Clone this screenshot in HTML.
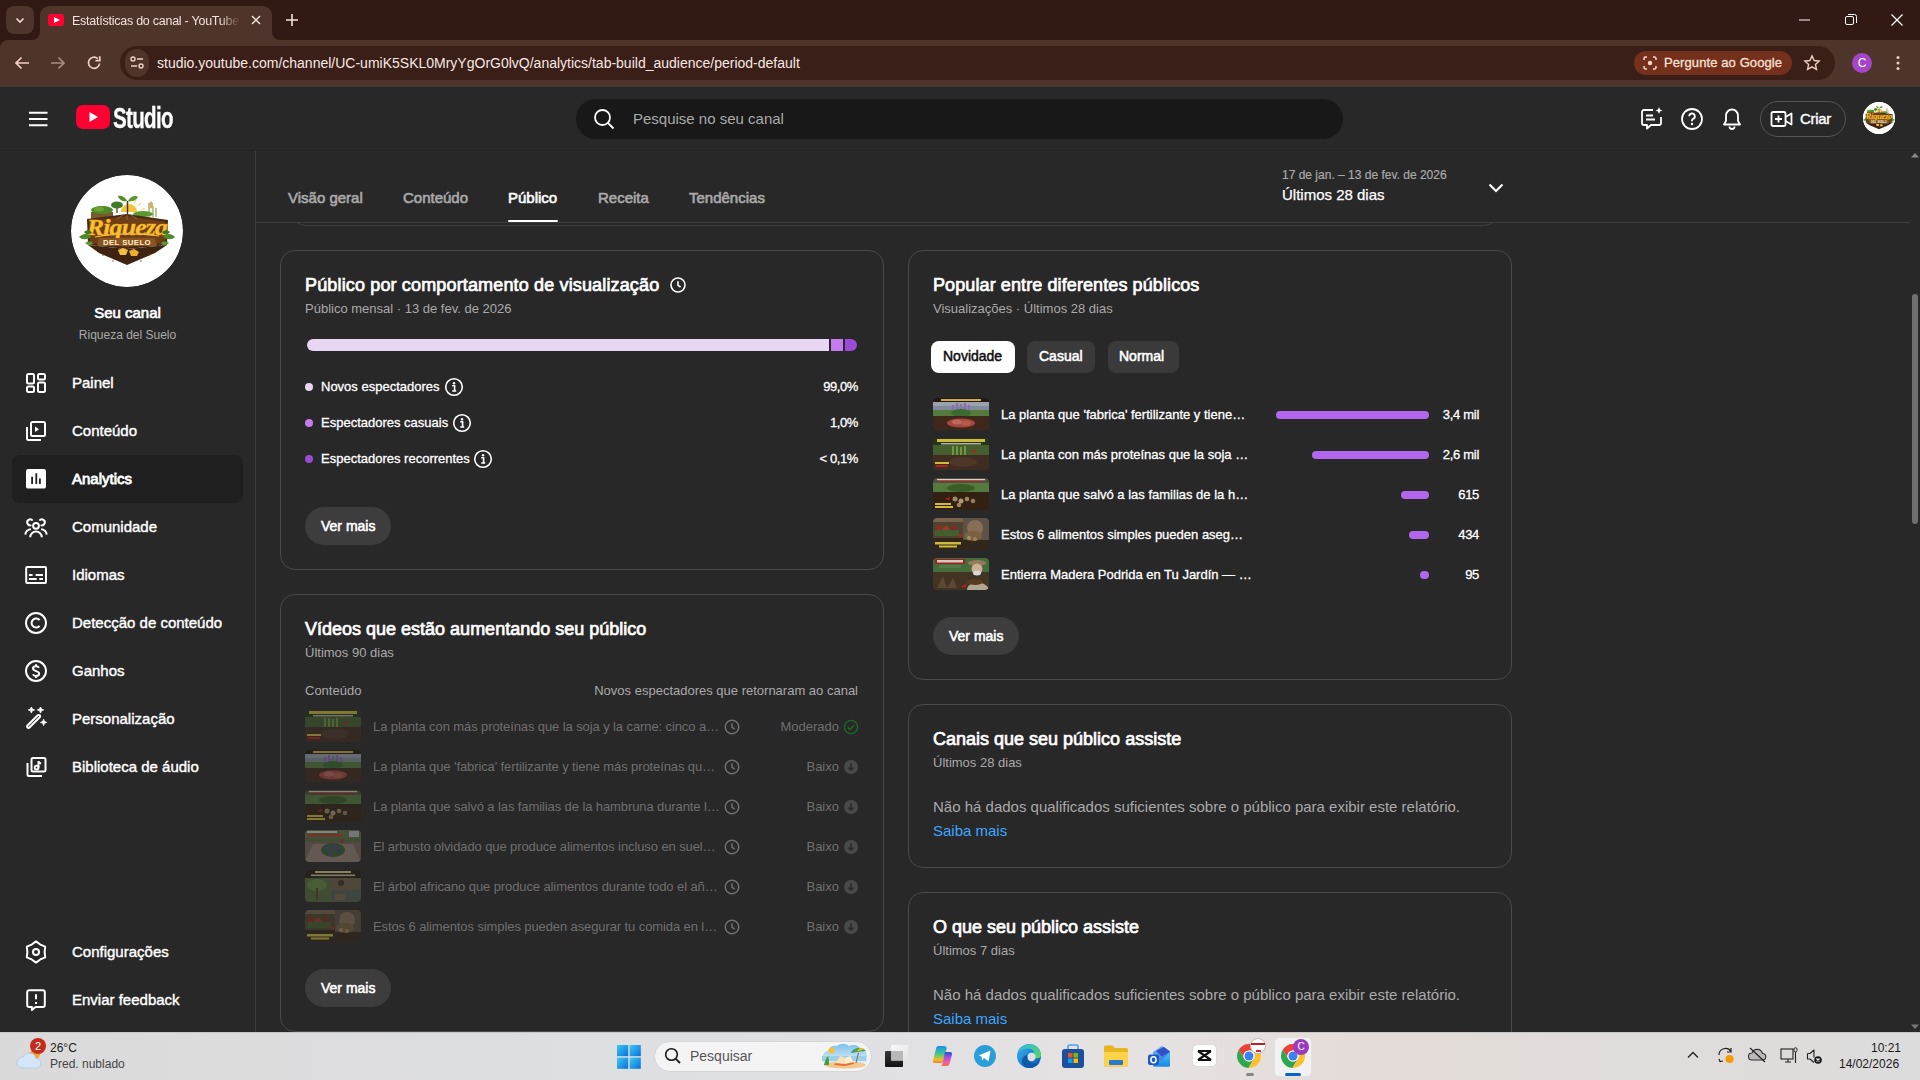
<!DOCTYPE html>
<html><head><meta charset="utf-8"><style>*{box-sizing:border-box;margin:0;padding:0}
html,body{width:1920px;height:1080px;overflow:hidden;background:#282828;font-family:"Liberation Sans",sans-serif;color:#fff}
.a{position:absolute}
.nw{white-space:nowrap;line-height:normal}
.card{position:absolute;border:1px solid #4a4a4a;border-radius:15px;background:#282828}
.t1{background:linear-gradient(180deg,#2a2a1a 0%,#6a7a9a 15%,#8a7ab0 30%,#4a7a3a 55%,#5a3a2a 75%,#b05040 90%,#4a2a1a 100%)}
.t2{background:linear-gradient(180deg,#c8b020 0%,#3a4a20 12%,#4a6a2a 35%,#6a4a2a 60%,#3a2a1a 85%,#c0a020 95%)}
.t3{background:linear-gradient(180deg,#8a3a20 0%,#3a6a2a 15%,#5a8a3a 40%,#5a4020 65%,#8a6a3a 80%,#3a2a1a 100%)}
.t4{background:linear-gradient(135deg,#4a3020 0%,#7a3a2a 30%,#8a6a4a 55%,#5a4030 80%,#2a2010 100%)}
.t5{background:linear-gradient(90deg,#6a6a4a 0%,#5a5a3a 40%,#c0a080 60%,#6a5030 100%)}
.t6{background:linear-gradient(180deg,#5a5a3a 0%,#4a6a3a 30%,#a08070 55%,#9a8070 80%,#7a6050 100%)}
.t7{background:linear-gradient(90deg,#4a6a2a 0%,#6a8a3a 40%,#8a6a4a 60%,#5a4a30 100%)}
</style></head><body>
<div class="a" style="left:0px;top:0px;width:1920px;height:40px;background:#331913;border-radius:0px;"></div>
<div class="a" style="left:6px;top:6px;width:28px;height:28px;background:#4f342c;border-radius:8px;"></div>
<svg class="a" style="left:14px;top:14px;" width="12" height="12" viewBox="0 0 12 12"><path d="M2.5 4.5L6 8l3.5-3.5" stroke="#f0d8d0" stroke-width="1.6" fill="none"/></svg>
<div class="a" style="left:40px;top:6px;width:232px;height:34px;background:#4f342c;border-radius:0px;border-radius:9px 9px 0 0"></div>
<svg class="a" style="left:32px;top:32px;" width="8" height="8" viewBox="0 0 8 8"><path d="M8 0V8H0A8 8 0 0 0 8 0z" fill="#4f342c"/></svg>
<svg class="a" style="left:272px;top:32px;" width="8" height="8" viewBox="0 0 8 8"><path d="M0 0V8H8A8 8 0 0 1 0 0z" fill="#4f342c"/></svg>
<div class="a" style="left:48px;top:14px;width:16px;height:12px;background:#ff0033;border-radius:3px;"></div>
<svg class="a" style="left:54px;top:17px;" width="6" height="6" viewBox="0 0 6 6"><path d="M0 0L6 3L0 6Z" fill="#fff"/></svg>
<div class="a nw" style="left:72px;top:14px;font-size:12.5px;letter-spacing:-0.25px;color:#f3e1da;width:168px;overflow:hidden;-webkit-mask-image:linear-gradient(90deg,#000 88%,transparent)">Estatísticas do canal - YouTube Studio</div>
<svg class="a" style="left:250px;top:14px;" width="12" height="12" viewBox="0 0 12 12"><path d="M2 2L10 10M10 2L2 10" stroke="#f3e1da" stroke-width="1.5"/></svg>
<svg class="a" style="left:285px;top:13px;" width="14" height="14" viewBox="0 0 14 14"><path d="M7 1V13M1 7H13" stroke="#f3e1da" stroke-width="1.6"/></svg>
<svg class="a" style="left:1798px;top:14px;" width="14" height="12" viewBox="0 0 14 12"><path d="M1 6H12" stroke="#fff" stroke-width="1"/></svg>
<svg class="a" style="left:1844px;top:13px;" width="14" height="14" viewBox="0 0 14 14"><rect x="1.5" y="3.5" width="8" height="8" rx="1.5" stroke="#fff" fill="none"/><path d="M4 1.5H10.5a2 2 0 0 1 2 2V10" stroke="#fff" fill="none"/></svg>
<svg class="a" style="left:1890px;top:13px;" width="14" height="14" viewBox="0 0 14 14"><path d="M1.5 1.5L12.5 12.5M12.5 1.5L1.5 12.5" stroke="#fff" stroke-width="1.2"/></svg>
<div class="a" style="left:0px;top:40px;width:20px;height:20px;background:#331913;border-radius:0px;"></div>
<div class="a" style="left:0px;top:40px;width:1920px;height:46px;background:#4f342c;border-radius:0px;border-radius:8px 0 0 0"></div>
<svg class="a" style="left:13px;top:54px;" width="18" height="18" viewBox="0 0 18 18"><path d="M16 9H3M8.5 3.5L3 9l5.5 5.5" stroke="#f0d0c6" stroke-width="1.7" fill="none"/></svg>
<svg class="a" style="left:49px;top:54px;" width="18" height="18" viewBox="0 0 18 18"><path d="M2 9H15M9.5 3.5L15 9l-5.5 5.5" stroke="#a88c84" stroke-width="1.7" fill="none"/></svg>
<svg class="a" style="left:85px;top:54px;" width="18" height="18" viewBox="0 0 18 18"><path d="M14.6 9.5A5.6 5.6 0 1 1 12.8 4.6" stroke="#f0d0c6" stroke-width="1.7" fill="none"/><path d="M14.8 2.2V6.6H10.4" stroke="#f0d0c6" stroke-width="1.7" fill="none"/></svg>
<div class="a" style="left:120px;top:46px;width:1715px;height:34px;background:#3a1e18;border-radius:17px;"></div>
<div class="a" style="left:125px;top:49px;width:24px;height:28px;background:#4f342c;border-radius:14px;"></div>
<svg class="a" style="left:129px;top:55px;" width="16" height="16" viewBox="0 0 16 16"><circle cx="4" cy="4" r="2" stroke="#f0d0c6" stroke-width="1.4" fill="none"/><path d="M8 4H14M2 11H8" stroke="#f0d0c6" stroke-width="1.4"/><circle cx="12" cy="11" r="2" stroke="#f0d0c6" stroke-width="1.4" fill="none"/></svg>
<div class="a nw" style="top:55px;font-size:14px;color:#f8e8e2;left:157px;">studio.youtube.com/channel/UC-umiK5SKL0MryYgOrG0lvQ/analytics/tab-build_audience/period-default</div>
<div class="a" style="left:1634px;top:51px;width:158px;height:24px;background:#75301c;border-radius:12px;"></div>
<svg class="a" style="left:1642px;top:55px;" width="16" height="16" viewBox="0 0 16 16"><path d="M2 5V3.5A1.5 1.5 0 0 1 3.5 2H5M11 2h1.5A1.5 1.5 0 0 1 14 3.5V5M14 11v1.5a1.5 1.5 0 0 1-1.5 1.5H11M5 14H3.5A1.5 1.5 0 0 1 2 12.5V11" stroke="#f8d8cc" stroke-width="1.5" fill="none"/><circle cx="8" cy="8" r="2.2" fill="#f8d8cc"/></svg>
<div class="a nw" style="top:55px;font-size:13px;color:#f8e0d6;left:1664px;-webkit-text-stroke:0.3px currentColor;letter-spacing:0.1px;">Pergunte ao Google</div>
<svg class="a" style="left:1803px;top:54px;" width="18" height="18" viewBox="0 0 24 24"><path d="M12 2.5l2.9 6.2 6.7.7-5 4.6 1.4 6.6L12 17.2l-5.9 3.4 1.4-6.6-5-4.6 6.7-.7z" stroke="#f0d0c6" stroke-width="1.8" fill="none"/></svg>
<div class="a" style="left:1852px;top:53px;width:20px;height:20px;border-radius:10px;background:#a545c8;color:#fff;font-size:12px;text-align:center;line-height:20px">C</div>
<svg class="a" style="left:1894px;top:55px;" width="8" height="16" viewBox="0 0 8 16"><circle cx="4" cy="2.5" r="1.5" fill="#f0d0c6"/><circle cx="4" cy="8" r="1.5" fill="#f0d0c6"/><circle cx="4" cy="13.5" r="1.5" fill="#f0d0c6"/></svg>
<div class="a" style="left:0px;top:86px;width:1920px;height:1px;background:#3a3a3a;border-radius:0px;"></div>
<svg class="a" style="left:29px;top:111px;" width="19" height="16" viewBox="0 0 19 16"><path d="M0 1.75H18.5M0 8H18.5M0 14.25H18.5" stroke="#fff" stroke-width="2"/></svg>
<div class="a" style="left:76px;top:105px;width:34px;height:24px;background:#ff0033;border-radius:7px;"></div>
<svg class="a" style="left:89px;top:112px;" width="10" height="10" viewBox="0 0 10 10"><path d="M0.5 0L9 5L0.5 10Z" fill="#fff"/></svg>
<div class="a nw" style="left:113px;top:102px;font-size:30px;font-weight:bold;letter-spacing:-1px;transform:scaleX(0.685);transform-origin:0 0;line-height:32px;-webkit-text-stroke:0.3px #fff">Studio</div>
<div class="a" style="left:576px;top:99px;width:767px;height:40px;background:#181818;border-radius:20px;"></div>
<svg class="a" style="left:592px;top:107px;" width="24" height="24" viewBox="0 0 24 24"><circle cx="10.5" cy="10.5" r="7.5" stroke="#fff" stroke-width="1.8" fill="none"/><path d="M16 16L21.5 21.5" stroke="#fff" stroke-width="1.8"/></svg>
<div class="a nw" style="top:110px;font-size:15px;color:#aaa;left:633px;">Pesquise no seu canal</div>
<svg class="a" style="left:1640px;top:106px;" width="24" height="24" viewBox="0 0 24 24"><path d="M13 4H4a2 2 0 0 0-2 2v11a2 2 0 0 0 2 2h3v3.5l4-3.5h8a2 2 0 0 0 2-2v-6" stroke="#fff" stroke-width="1.8" fill="none" stroke-linejoin="round"/><path d="M6 9.5H13M6 13.5H15" stroke="#fff" stroke-width="1.8"/><path d="M19 1l1 2.5 2.5 1-2.5 1-1 2.5-1-2.5-2.5-1 2.5-1z" fill="#fff"/></svg>
<svg class="a" style="left:1680px;top:107px;" width="24" height="24" viewBox="0 0 24 24"><circle cx="12" cy="12" r="10" stroke="#fff" stroke-width="1.8" fill="none"/><path d="M9.2 9.3a2.8 2.8 0 1 1 3.8 2.6c-.7.3-1 .9-1 1.6v.8" stroke="#fff" stroke-width="1.8" fill="none"/><circle cx="12" cy="17" r="1.2" fill="#fff"/></svg>
<svg class="a" style="left:1720px;top:107px;" width="24" height="24" viewBox="0 0 24 24"><path d="M12 2.5a6 6 0 0 0-6 6v5.5L4 17.5h16L18 14V8.5a6 6 0 0 0-6-6z" stroke="#fff" stroke-width="1.8" fill="none" stroke-linejoin="round"/><path d="M9.5 19.5a2.5 2.5 0 0 0 5 0" stroke="#fff" stroke-width="1.8" fill="none"/></svg>
<div class="a" style="left:1760px;top:101px;width:86px;height:36px;border:1px solid #555;border-radius:18px"></div>
<svg class="a" style="left:1770px;top:107px;" width="24" height="24" viewBox="0 0 24 24"><rect x="1.5" y="5" width="14" height="14" rx="1.5" stroke="#fff" stroke-width="1.8" fill="none"/><path d="M8.5 8.5V15.5M5 12H12" stroke="#fff" stroke-width="1.8"/><path d="M15.5 10L21.5 6.5V17.5L15.5 14" stroke="#fff" stroke-width="1.8" fill="none" stroke-linejoin="round"/></svg>
<div class="a nw" style="top:110px;font-size:15px;color:#fff;left:1800px;-webkit-text-stroke:0.4px currentColor;letter-spacing:-0.3px;">Criar</div>
<div class="a" style="left:1863px;top:102px;width:32px;height:32px;border-radius:16px;background:#fff;overflow:hidden"><svg width="32" height="32" viewBox="8 8 96 96"><use href="#logo"/></svg></div>
<div class="a" style="left:0px;top:150px;width:1920px;height:1px;background:#232323;border-radius:0px;"></div>
<div class="a" style="left:255px;top:151px;width:1px;height:881px;background:#3e3e3e"></div>
<svg width="0" height="0" style="position:absolute"><defs><g id="logo">
<circle cx="56" cy="56" r="56" fill="#fff"/>
<path d="M66 37a8 8 0 0 0-16 0z" fill="#f4c23c"/>
<path d="M58 28l1-4M63 29l2-4M67 31l3-3M70 35l4-2" stroke="#f6cf5a" stroke-width="1"/>
<path d="M20 37h22v7H20z" fill="#7a5a2a"/>
<ellipse cx="31" cy="35" rx="11" ry="4" fill="#4e8a26"/><ellipse cx="28" cy="34" rx="5" ry="2.5" fill="#6aa632"/>
<path d="M46 38v-7" stroke="#5a3e1a" stroke-width="1.3"/><ellipse cx="46" cy="30" rx="6" ry="3.5" fill="#3f7a28"/>
<path d="M56.5 39V26" stroke="#3a3a18" stroke-width="1.4"/>
<path d="M56 26c-2-5-7-6-9-5 1 4 5 6 9 5z" fill="#4f8e2a"/><path d="M57 26c2-5 8-6 10-4-2 4-6 5-10 4z" fill="#5a9a30"/>
<path d="M78 42V28M82 42V31M85 42V33" stroke="#9ab060" stroke-width="1.4"/><ellipse cx="80" cy="30" rx="2" ry="3.5" fill="#d8b070"/>
<ellipse cx="72" cy="39" rx="10" ry="3" fill="#5a9a30"/>
<path d="M16 44L56 39L97 45L96 70L56 74L17 70Z" fill="#4a2a12"/>
<path d="M18 46L56 41L95 47L94 68L56 72L19 68Z" fill="#6e3e16"/>
<path d="M52 40l-6 4M56 40v5M60 40l6 4" stroke="#a07848" stroke-width=".7"/>
<text x="56" y="60" text-anchor="middle" font-family="Liberation Serif" font-style="italic" font-weight="bold" font-size="24" fill="#f8c230" stroke="#f0a820" stroke-width=".5" letter-spacing="-.8" transform="translate(56 0) scale(1.08 1) translate(-56 0)">Riqueza</text>
<path d="M24 62C45 58 70 58 88 61" stroke="#f0b838" stroke-width="1.2" fill="none"/>
<path d="M28 63H84L86 71H26Z" fill="#8a5422"/>
<text x="56" y="70" text-anchor="middle" font-family="Liberation Sans" font-weight="bold" font-size="7.8" fill="#fcf0c8" letter-spacing=".4">DEL SUELO</text>
<path d="M17 70L56 74L96 70L84 78L56 90L28 78Z" fill="#3e2410"/>
<path d="M47 75l5-2 5 2-2 5-6 0z" fill="#f2c03a"/><path d="M58 76l5-2 5 3-2 4-6 0z" fill="#eab030"/>
<circle cx="32" cy="80" r=".8" fill="#6a4020"/><circle cx="78" cy="80" r=".8" fill="#6a4020"/><circle cx="42" cy="86" r=".7" fill="#6a4020"/><circle cx="70" cy="86" r=".7" fill="#6a4020"/>
<path d="M8 62c4-4 9-4 12 0-4 3-9 3-12 0z" fill="#4a8a2a"/><path d="M13 57c3-3 7-2 8 1-3 2-6 2-8-1z" fill="#3d7a22"/><path d="M14 68c3-2 7-2 8 1-3 2-6 1-8-1z" fill="#5a9a32"/>
<path d="M104 62c-4-4-9-4-12 0 4 3 9 3 12 0z" fill="#4a8a2a"/><path d="M99 57c-3-3-7-2-8 1 3 2 6 2 8-1z" fill="#3d7a22"/><path d="M98 68c-3-2-7-2-8 1 3 2 6 1 8-1z" fill="#5a9a32"/>
</g>
</defs></svg>
<div class="a" style="left:71px;top:175px;width:112px;height:112px;border-radius:56px;overflow:hidden"><svg width="112" height="112" viewBox="0 0 112 112"><use href="#logo"/></svg></div>
<div class="a nw" style="left:0;width:255px;text-align:center;top:304px;font-size:15px;-webkit-text-stroke:0.65px #fff">Seu canal</div>
<div class="a nw" style="left:0;width:255px;text-align:center;top:328px;font-size:12px;color:#aaa">Riqueza del Suelo</div>
<div class="a" style="left:12px;top:455px;width:231px;height:48px;background:#1f1f1f;border-radius:8px;"></div>
<div class="a nw" style="top:374px;font-size:15px;color:#fff;left:72px;-webkit-text-stroke:0.4px currentColor;">Painel</div>
<svg class="a" style="left:24px;top:371px;" width="24" height="24" viewBox="0 0 24 24"><g fill="none" stroke="#fff" stroke-width="2"><rect x="3" y="3" width="7" height="9.5" rx="1.5"/><rect x="14" y="3" width="7" height="5.5" rx="1.5"/><rect x="3" y="15.5" width="7" height="5.5" rx="1.5"/><rect x="14" y="11.5" width="7" height="9.5" rx="1.5"/></g></svg>
<div class="a nw" style="top:422px;font-size:15px;color:#fff;left:72px;-webkit-text-stroke:0.4px currentColor;">Conteúdo</div>
<svg class="a" style="left:24px;top:419px;" width="24" height="24" viewBox="0 0 24 24"><g fill="none" stroke="#fff" stroke-width="2"><rect x="7" y="3" width="14" height="14" rx="1.5"/><path d="M3 8v11.5a1.5 1.5 0 0 0 1.5 1.5H17"/><path d="M11 7.5v5.5l4-2.75z" fill="#fff" stroke="none"/></g></svg>
<div class="a nw" style="top:470px;font-size:15px;color:#fff;left:72px;-webkit-text-stroke:0.4px currentColor;-webkit-text-stroke:0.8px #fff">Analytics</div>
<svg class="a" style="left:24px;top:467px;" width="24" height="24" viewBox="0 0 24 24"><g fill="none" stroke="#fff" stroke-width="2"><rect x="2" y="2" width="20" height="19.6" rx="2.2" fill="#fff" stroke="none"/><path d="M8.1 17V9.8M12.3 17V6.2M15.9 17V11.6" stroke="#1f1f1f" stroke-width="1.8"/></g></svg>
<div class="a nw" style="top:518px;font-size:15px;color:#fff;left:72px;-webkit-text-stroke:0.4px currentColor;">Comunidade</div>
<svg class="a" style="left:24px;top:515px;" width="24" height="24" viewBox="0 0 24 24"><g fill="none" stroke="#fff" stroke-width="2"><circle cx="12" cy="10.8" r="2.9"/><path d="M6.2 22.3a5.8 5.8 0 0 1 11.6 0"/><path d="M7.4 10.2A3 3 0 1 1 8.6 5.6M16.6 10.2A3 3 0 1 0 15.4 5.6"/><path d="M1.3 19.6A6 6 0 0 1 7 14.2M22.7 19.6A6 6 0 0 0 17 14.2"/></g></svg>
<div class="a nw" style="top:566px;font-size:15px;color:#fff;left:72px;-webkit-text-stroke:0.4px currentColor;">Idiomas</div>
<svg class="a" style="left:24px;top:563px;" width="24" height="24" viewBox="0 0 24 24"><g fill="none" stroke="#fff" stroke-width="2"><rect x="2.2" y="3.9" width="19.8" height="16.1" rx="1"/><path d="M4.9 12h3.7M11.6 12H19M4.9 16h7.8M15.3 16H19"/></g></svg>
<div class="a nw" style="top:614px;font-size:15px;color:#fff;left:72px;-webkit-text-stroke:0.4px currentColor;">Detecção de conteúdo</div>
<svg class="a" style="left:24px;top:611px;" width="24" height="24" viewBox="0 0 24 24"><g fill="none" stroke="#fff" stroke-width="2"><circle cx="12" cy="12" r="10"/><path d="M15.6 9.2A4.5 4.5 0 1 0 15.6 14.8"/></g></svg>
<div class="a nw" style="top:662px;font-size:15px;color:#fff;left:72px;-webkit-text-stroke:0.4px currentColor;">Ganhos</div>
<svg class="a" style="left:24px;top:659px;" width="24" height="24" viewBox="0 0 24 24"><g fill="none" stroke="#fff" stroke-width="2"><circle cx="12" cy="12" r="10"/><path d="M15 8.8c-.6-1-1.7-1.5-3-1.5-1.7 0-3 .9-3 2.3 0 3.2 6.2 1.8 6.2 5 0 1.4-1.3 2.4-3.2 2.4-1.4 0-2.6-.6-3.1-1.6M12 5.3v2M12 16.9v2"/></g></svg>
<div class="a nw" style="top:710px;font-size:15px;color:#fff;left:72px;-webkit-text-stroke:0.4px currentColor;">Personalização</div>
<svg class="a" style="left:24px;top:707px;" width="24" height="24" viewBox="0 0 24 24"><g fill="none" stroke="#fff" stroke-width="2"><path d="M3.5 20.5l10.2-10.2a1.4 1.4 0 0 1 2 0 1.4 1.4 0 0 1 0 2L5.5 22.5a1.4 1.4 0 0 1-2 0 1.4 1.4 0 0 1 0-2z" transform="translate(0,-2)"/><path d="M7.4 -3.3l.9 2.3 2.3.9-2.3.9-.9 2.3-.9-2.3-2.3-.9 2.3-.9zM16.5 -3.3l.9 2.3 2.3.9-2.3.9-.9 2.3-.9-2.3-2.3-.9 2.3-.9zM19.6 9.2l.9 2.3 2.3.9-2.3.9-.9 2.3-.9-2.3-2.3-.9 2.3-.9z" fill="#fff" stroke="#fff" stroke-width=".8" stroke-linejoin="round" transform="translate(0,3)"/></g></svg>
<div class="a nw" style="top:758px;font-size:15px;color:#fff;left:72px;-webkit-text-stroke:0.4px currentColor;">Biblioteca de áudio</div>
<svg class="a" style="left:24px;top:755px;" width="24" height="24" viewBox="0 0 24 24"><g fill="none" stroke="#fff" stroke-width="2"><rect x="7.5" y="3" width="14" height="13.5" rx="1.5"/><path d="M3.5 8v11.5A1.5 1.5 0 0 0 5 21h13"/><path d="M14.5 6.3v6.2"/><circle cx="12.6" cy="12.6" r="1.9"/><path d="M14.5 6.3c.3 1.3 1.4 2 2.6 2.2"/></g></svg>
<div class="a nw" style="top:943px;font-size:15px;color:#fff;left:72px;-webkit-text-stroke:0.4px currentColor;">Configurações</div>
<svg class="a" style="left:24px;top:940px;" width="24" height="24" viewBox="0 0 24 24"><g fill="none" stroke="#fff" stroke-width="2"><circle cx="12" cy="12" r="3"/><path d="M12.00 1.40 L16.30 4.55 L21.18 6.70 L20.60 12.00 L21.18 17.30 L16.30 19.45 L12.00 22.60 L7.70 19.45 L2.82 17.30 L3.40 12.00 L2.82 6.70 L7.70 4.55Z" stroke-linejoin="round"/></g></svg>
<div class="a nw" style="top:991px;font-size:15px;color:#fff;left:72px;-webkit-text-stroke:0.4px currentColor;">Enviar feedback</div>
<svg class="a" style="left:24px;top:988px;" width="24" height="24" viewBox="0 0 24 24"><g fill="none" stroke="#fff" stroke-width="2"><path d="M3.2 4.2a2 2 0 0 1 2-2h13.6a2 2 0 0 1 2 2V17a2 2 0 0 1-2 2H11.5l-3.6 3V19H5.2a2 2 0 0 1-2-2z" stroke-linejoin="round"/><path d="M12 6.3v5"/><path d="M12 14v2" /></g></svg>
<div class="a" style="left:290px;top:170px;width:1210px;height:56px;border:1px solid #3e3e3e;border-top:none;border-radius:0 0 16px 16px"></div>
<div class="a" style="left:256px;top:151px;width:1654px;height:72px;background:#282828;border-bottom:1px solid #3e3e3e"></div>
<div class="a nw" style="top:189px;font-size:15px;color:#aaa;left:288px;-webkit-text-stroke:0.6px #aaa">Visão geral</div>
<div class="a nw" style="top:189px;font-size:15px;color:#aaa;left:403px;-webkit-text-stroke:0.6px #aaa">Conteúdo</div>
<div class="a nw" style="top:189px;font-size:15px;color:#fff;left:508px;-webkit-text-stroke:0.6px #fff">Público</div>
<div class="a nw" style="top:189px;font-size:15px;color:#aaa;left:598px;-webkit-text-stroke:0.6px #aaa">Receita</div>
<div class="a nw" style="top:189px;font-size:15px;color:#aaa;left:689px;-webkit-text-stroke:0.6px #aaa">Tendências</div>
<div class="a" style="left:508px;top:220px;width:50px;height:2px;background:#fff;border-radius:1px;"></div>
<div class="a nw" style="top:168px;font-size:12px;color:#aaa;left:1282px;-webkit-text-stroke:0.2px #aaa">17 de jan. – 13 de fev. de 2026</div>
<div class="a nw" style="top:186px;font-size:15px;color:#fff;left:1282px;-webkit-text-stroke:0.25px #fff">Últimos 28 dias</div>
<svg class="a" style="left:1486px;top:179px;" width="20" height="18" viewBox="0 0 20 18"><path d="M3.5 5.5L10 12l6.5-6.5" stroke="#fff" stroke-width="2" fill="none"/></svg>
<svg class="a" style="left:1910px;top:151px;" width="10" height="8" viewBox="0 0 10 8"><path d="M1 6.5L5 2l4 4.5z" fill="#888"/></svg>
<svg class="a" style="left:1910px;top:1023px;" width="10" height="8" viewBox="0 0 10 8"><path d="M1 1.5L5 6l4-4.5z" fill="#777"/></svg>
<div class="a" style="left:1912px;top:294px;width:6px;height:230px;background:#707070;border-radius:3px;"></div>
<div class="card" style="left:280px;top:250px;width:604px;height:320px"></div>
<div class="a nw" style="top:275px;font-size:18px;color:#fff;left:305px;-webkit-text-stroke:0.7px currentColor;letter-spacing:0.15px;">Público por comportamento de visualização</div>
<svg class="a" style="left:669px;top:276px;" width="18" height="18" viewBox="0 0 18 18"><circle cx="9" cy="9" r="7" stroke="#fff" stroke-width="1.6" fill="none"/><path d="M9 5.3v4l2.6 1.7" stroke="#fff" stroke-width="1.6" fill="none"/></svg>
<div class="a nw" style="top:301px;font-size:13px;color:#aaa;left:305px;">Público mensal · 13 de fev. de 2026</div>
<div class="a" style="left:307px;top:339px;width:550px;height:12px;border-radius:6px;overflow:hidden;background:#282828">
 <div class="a" style="left:0;top:0;width:522px;height:12px;background:#e8d6f2"></div>
 <div class="a" style="left:524px;top:0;width:12px;height:12px;background:#c57bed"></div>
 <div class="a" style="left:538px;top:0;width:12px;height:12px;background:#9b4cd6"></div>
</div>
<div class="a" style="left:305px;top:383px;width:8px;height:8px;background:#e8d6f2;border-radius:4px;"></div>
<div class="a nw" style="top:379px;font-size:13px;color:#fff;left:321px;-webkit-text-stroke:0.3px currentColor;">Novos espectadores</div>
<svg class="a" style="left:444px;top:377px;" width="20" height="20" viewBox="0 0 20 20"><circle cx="10" cy="10" r="8.3" stroke="#fff" stroke-width="1.6" fill="none"/><circle cx="10" cy="6.2" r="1.2" fill="#fff"/><path d="M8.2 8.8h2.4v5.2M8.2 14h4" stroke="#fff" stroke-width="1.6" fill="none"/></svg>
<div class="a nw" style="top:379px;font-size:13px;color:#fff;right:1062px;-webkit-text-stroke:0.3px currentColor;letter-spacing:-0.4px;">99,0%</div>
<div class="a" style="left:305px;top:419px;width:8px;height:8px;background:#c57bed;border-radius:4px;"></div>
<div class="a nw" style="top:415px;font-size:13px;color:#fff;left:321px;-webkit-text-stroke:0.3px currentColor;">Espectadores casuais</div>
<svg class="a" style="left:452px;top:413px;" width="20" height="20" viewBox="0 0 20 20"><circle cx="10" cy="10" r="8.3" stroke="#fff" stroke-width="1.6" fill="none"/><circle cx="10" cy="6.2" r="1.2" fill="#fff"/><path d="M8.2 8.8h2.4v5.2M8.2 14h4" stroke="#fff" stroke-width="1.6" fill="none"/></svg>
<div class="a nw" style="top:415px;font-size:13px;color:#fff;right:1062px;-webkit-text-stroke:0.3px currentColor;letter-spacing:-0.4px;">1,0%</div>
<div class="a" style="left:305px;top:455px;width:8px;height:8px;background:#9b4cd6;border-radius:4px;"></div>
<div class="a nw" style="top:451px;font-size:13px;color:#fff;left:321px;-webkit-text-stroke:0.3px currentColor;">Espectadores recorrentes</div>
<svg class="a" style="left:473px;top:449px;" width="20" height="20" viewBox="0 0 20 20"><circle cx="10" cy="10" r="8.3" stroke="#fff" stroke-width="1.6" fill="none"/><circle cx="10" cy="6.2" r="1.2" fill="#fff"/><path d="M8.2 8.8h2.4v5.2M8.2 14h4" stroke="#fff" stroke-width="1.6" fill="none"/></svg>
<div class="a nw" style="top:451px;font-size:13px;color:#fff;right:1062px;-webkit-text-stroke:0.3px currentColor;letter-spacing:-0.4px;">< 0,1%</div>
<div class="a" style="left:305px;top:507px;width:86px;height:38px;background:#3d3d3d;border-radius:19px;"></div>
<div class="a nw" style="top:518px;font-size:14px;color:#fff;left:321px;-webkit-text-stroke:0.55px #fff">Ver mais</div>
<div class="card" style="left:280px;top:594px;width:604px;height:438px"></div>
<div class="a nw" style="top:619px;font-size:18px;color:#fff;left:305px;-webkit-text-stroke:0.7px currentColor;">Vídeos que estão aumentando seu público</div>
<div class="a nw" style="top:645px;font-size:13px;color:#aaa;left:305px;">Últimos 90 dias</div>
<div class="a nw" style="top:683px;font-size:13px;color:#aaa;left:305px;">Conteúdo</div>
<div class="a nw" style="top:683px;font-size:13px;color:#aaa;right:1062px;">Novos espectadores que retornaram ao canal</div>
<svg class="a" style="left:305px;top:710px;border-radius:4px;opacity:0.55;filter:saturate(.85) brightness(.9)" width="56" height="32" viewBox="0 0 56 32"><defs><clipPath id="ct2305710"><rect width="56" height="32" rx="4"/></clipPath></defs><g clip-path="url(#ct2305710)"><rect width="56" height="32" fill="#4a3a20"/>
<rect y="0" width="56" height="8" fill="#2a3a1a"/><rect x="4" y="1" width="48" height="3" fill="#e8d030"/><rect x="8" y="5" width="40" height="1.5" fill="#c8c8a0"/>
<rect y="7" width="56" height="10" fill="#4a6a2a"/>
<path d="M20 8V18M24 8V19M28 9V18M32 8V19" stroke="#7ab040" stroke-width="1.8"/>
<rect y="17" width="56" height="15" fill="#4a3020"/><ellipse cx="30" cy="24" rx="14" ry="5" fill="#5a3a28"/>
<path d="M38 14l5-3-1 4z" fill="#e02020"/>
<rect x="2" y="24" width="14" height="2" fill="#e8d030"/><rect x="3" y="27" width="12" height="2" fill="#d82020"/></g></svg>
<div class="a nw" style="top:719px;font-size:13px;color:#6f6f6f;left:373px;letter-spacing:-0.1px;">La planta con más proteínas que la soja y la carne: cinco a…</div>
<svg class="a" style="left:723px;top:718px;" width="18" height="18" viewBox="0 0 18 18"><circle cx="9" cy="9" r="6.8" stroke="#6f6f6f" stroke-width="1.5" fill="none"/><path d="M9 5.3v4l2.6 1.7" stroke="#6f6f6f" stroke-width="1.5" fill="none"/></svg>
<div class="a nw" style="top:719px;font-size:13px;color:#6f6f6f;right:1081px;">Moderado</div>
<svg class="a" style="left:843px;top:719px;" width="16" height="16" viewBox="0 0 16 16"><circle cx="8" cy="8" r="6.6" stroke="#16691f" stroke-width="1.4" fill="none"/><path d="M4.8 8.4l2.2 2 4.2-4.2" stroke="#16691f" stroke-width="1.5" fill="none"/></svg>
<svg class="a" style="left:305px;top:750px;border-radius:4px;opacity:0.55;filter:saturate(.85) brightness(.9)" width="56" height="32" viewBox="0 0 56 32"><defs><clipPath id="ct1305750"><rect width="56" height="32" rx="4"/></clipPath></defs><g clip-path="url(#ct1305750)"><rect width="56" height="32" fill="#3a2a1a"/>
<rect y="0" width="56" height="4" fill="#2a1a10"/><rect x="8" y="1" width="40" height="2" fill="#e8c040"/>
<rect y="4" width="56" height="10" fill="#8c9cb0"/><rect y="4" width="56" height="4" fill="#a8b4c4"/>
<path d="M20 14V7M24 14V5M28 14V6M32 14V5M36 14V7" stroke="#9a78c8" stroke-width="2.4"/>
<rect y="12" width="56" height="6" fill="#5a8a3a"/><ellipse cx="28" cy="15" rx="10" ry="4" fill="#3a7a2a"/>
<rect y="18" width="56" height="14" fill="#4a2c1a"/>
<ellipse cx="28" cy="25" rx="14" ry="4.5" fill="#c84a40"/><ellipse cx="24" cy="24" rx="5" ry="2.5" fill="#e07060"/><ellipse cx="33" cy="25" rx="5" ry="2.5" fill="#d86050"/></g></svg>
<div class="a nw" style="top:759px;font-size:13px;color:#6f6f6f;left:373px;letter-spacing:-0.1px;">La planta que 'fabrica' fertilizante y tiene más proteínas qu…</div>
<svg class="a" style="left:723px;top:758px;" width="18" height="18" viewBox="0 0 18 18"><circle cx="9" cy="9" r="6.8" stroke="#6f6f6f" stroke-width="1.5" fill="none"/><path d="M9 5.3v4l2.6 1.7" stroke="#6f6f6f" stroke-width="1.5" fill="none"/></svg>
<div class="a nw" style="top:759px;font-size:13px;color:#6f6f6f;right:1081px;">Baixo</div>
<svg class="a" style="left:843px;top:759px;" width="16" height="16" viewBox="0 0 16 16"><circle cx="8" cy="8" r="7" fill="#4a4a4a"/><path d="M8 4.3v6.5M5.5 8.5L8 11l2.5-2.5" stroke="#282828" stroke-width="1.5" fill="none"/></svg>
<svg class="a" style="left:305px;top:790px;border-radius:4px;opacity:0.55;filter:saturate(.85) brightness(.9)" width="56" height="32" viewBox="0 0 56 32"><defs><clipPath id="ct3305790"><rect width="56" height="32" rx="4"/></clipPath></defs><g clip-path="url(#ct3305790)"><rect width="56" height="32" fill="#3a2818"/>
<rect y="0" width="56" height="5" fill="#5a5a40"/><rect x="4" y="1" width="48" height="1.2" fill="#e8e8e0"/><rect x="6" y="3" width="44" height="1.2" fill="#d82020"/>
<rect y="5" width="56" height="9" fill="#5a8a3a"/><ellipse cx="28" cy="10" rx="14" ry="4" fill="#3a6a22"/>
<rect y="14" width="56" height="18" fill="#3a2412"/>
<circle cx="22" cy="21" r="2.5" fill="#b89868"/><circle cx="28" cy="23" r="2.5" fill="#c8a878"/><circle cx="34" cy="21" r="2.3" fill="#b89060"/><circle cx="40" cy="23" r="2.3" fill="#a88858"/><circle cx="26" cy="27" r="2.3" fill="#b09060"/>
<path d="M12 21l5-2-1 3z" fill="#e02020"/>
<rect x="2" y="25" width="16" height="2" fill="#e8d030"/><rect x="2" y="28" width="18" height="2" fill="#e8d030"/></g></svg>
<div class="a nw" style="top:799px;font-size:13px;color:#6f6f6f;left:373px;letter-spacing:-0.1px;">La planta que salvó a las familias de la hambruna durante l…</div>
<svg class="a" style="left:723px;top:798px;" width="18" height="18" viewBox="0 0 18 18"><circle cx="9" cy="9" r="6.8" stroke="#6f6f6f" stroke-width="1.5" fill="none"/><path d="M9 5.3v4l2.6 1.7" stroke="#6f6f6f" stroke-width="1.5" fill="none"/></svg>
<div class="a nw" style="top:799px;font-size:13px;color:#6f6f6f;right:1081px;">Baixo</div>
<svg class="a" style="left:843px;top:799px;" width="16" height="16" viewBox="0 0 16 16"><circle cx="8" cy="8" r="7" fill="#4a4a4a"/><path d="M8 4.3v6.5M5.5 8.5L8 11l2.5-2.5" stroke="#282828" stroke-width="1.5" fill="none"/></svg>
<svg class="a" style="left:305px;top:830px;border-radius:4px;opacity:0.55;filter:saturate(.85) brightness(.9)" width="56" height="32" viewBox="0 0 56 32"><defs><clipPath id="ct6305830"><rect width="56" height="32" rx="4"/></clipPath></defs><g clip-path="url(#ct6305830)"><rect width="56" height="32" fill="#8a7060"/>
<rect width="56" height="8" fill="#6a7a4a"/><rect x="2" y="1" width="30" height="2" fill="#e8e8d0"/><rect x="2" y="4" width="36" height="2.5" fill="#d84020"/><rect x="44" y="1" width="10" height="6" fill="#c8c8d0"/>
<rect y="8" width="56" height="4" fill="#5a7a3a"/>
<path d="M0 32L8 14H48L56 32z" fill="#a89080"/>
<ellipse cx="28" cy="20" rx="12" ry="7" fill="#3a6a2a"/><circle cx="23" cy="18" r="2.5" fill="#4a50a0"/><circle cx="30" cy="17" r="2.5" fill="#5050a8"/><circle cx="34" cy="21" r="2.3" fill="#4a48a0"/><circle cx="25" cy="23" r="2.3" fill="#4850a0"/>
<path d="M35 12l4-4-1 5z" fill="#e02020"/></g></svg>
<div class="a nw" style="top:839px;font-size:13px;color:#6f6f6f;left:373px;letter-spacing:-0.1px;">El arbusto olvidado que produce alimentos incluso en suel…</div>
<svg class="a" style="left:723px;top:838px;" width="18" height="18" viewBox="0 0 18 18"><circle cx="9" cy="9" r="6.8" stroke="#6f6f6f" stroke-width="1.5" fill="none"/><path d="M9 5.3v4l2.6 1.7" stroke="#6f6f6f" stroke-width="1.5" fill="none"/></svg>
<div class="a nw" style="top:839px;font-size:13px;color:#6f6f6f;right:1081px;">Baixo</div>
<svg class="a" style="left:843px;top:839px;" width="16" height="16" viewBox="0 0 16 16"><circle cx="8" cy="8" r="7" fill="#4a4a4a"/><path d="M8 4.3v6.5M5.5 8.5L8 11l2.5-2.5" stroke="#282828" stroke-width="1.5" fill="none"/></svg>
<svg class="a" style="left:305px;top:870px;border-radius:4px;opacity:0.55;filter:saturate(.85) brightness(.9)" width="56" height="32" viewBox="0 0 56 32"><defs><clipPath id="ct7305870"><rect width="56" height="32" rx="4"/></clipPath></defs><g clip-path="url(#ct7305870)"><rect width="56" height="32" fill="#4a3a22"/>
<rect width="56" height="8" fill="#2a2010"/><rect x="10" y="1" width="36" height="2" fill="#f0e0a0"/><rect x="6" y="4.5" width="44" height="1.6" fill="#e8d8a0"/>
<rect y="8" width="26" height="24" fill="#5a7a3a"/><ellipse cx="12" cy="15" rx="10" ry="6" fill="#6a9a3a"/><rect x="11" y="18" width="2" height="12" fill="#6a4a2a"/>
<rect x="26" y="8" width="30" height="12" fill="#7a6a4a"/><circle cx="36" cy="13" r="3" fill="#4a3a2a"/>
<rect x="26" y="20" width="30" height="12" fill="#5a6a5a"/><rect x="30" y="24" width="10" height="6" fill="#8a7050"/></g></svg>
<div class="a nw" style="top:879px;font-size:13px;color:#6f6f6f;left:373px;letter-spacing:-0.1px;">El árbol africano que produce alimentos durante todo el añ…</div>
<svg class="a" style="left:723px;top:878px;" width="18" height="18" viewBox="0 0 18 18"><circle cx="9" cy="9" r="6.8" stroke="#6f6f6f" stroke-width="1.5" fill="none"/><path d="M9 5.3v4l2.6 1.7" stroke="#6f6f6f" stroke-width="1.5" fill="none"/></svg>
<div class="a nw" style="top:879px;font-size:13px;color:#6f6f6f;right:1081px;">Baixo</div>
<svg class="a" style="left:843px;top:879px;" width="16" height="16" viewBox="0 0 16 16"><circle cx="8" cy="8" r="7" fill="#4a4a4a"/><path d="M8 4.3v6.5M5.5 8.5L8 11l2.5-2.5" stroke="#282828" stroke-width="1.5" fill="none"/></svg>
<svg class="a" style="left:305px;top:910px;border-radius:4px;opacity:0.55;filter:saturate(.85) brightness(.9)" width="56" height="32" viewBox="0 0 56 32"><defs><clipPath id="ct4305910"><rect width="56" height="32" rx="4"/></clipPath></defs><g clip-path="url(#ct4305910)"><rect width="56" height="32" fill="#3a2a1a"/>
<rect width="30" height="20" fill="#5a4a30"/><rect width="56" height="4" fill="#8a7050"/>
<circle cx="6" cy="10" r="3" fill="#a83020"/><circle cx="13" cy="11" r="3" fill="#b84030"/><circle cx="21" cy="10" r="3" fill="#983020"/>
<rect x="2" y="12" width="24" height="6" fill="#4a6a2a"/>
<rect x="30" y="0" width="26" height="22" fill="#6a5a4a"/><ellipse cx="42" cy="10" rx="8" ry="8" fill="#9a7a5a"/><ellipse cx="40" cy="18" rx="9" ry="5" fill="#8a6a40"/>
<circle cx="36" cy="20" r="2" fill="#c0a060"/><circle cx="42" cy="21" r="2" fill="#b89050"/>
<path d="M24 18l5-3-1 4z" fill="#e02020"/>
<rect x="2" y="24" width="26" height="2.5" fill="#e8d030"/><rect x="6" y="27.5" width="18" height="2" fill="#e8d030"/></g></svg>
<div class="a nw" style="top:919px;font-size:13px;color:#6f6f6f;left:373px;letter-spacing:-0.1px;">Estos 6 alimentos simples pueden asegurar tu comida en l…</div>
<svg class="a" style="left:723px;top:918px;" width="18" height="18" viewBox="0 0 18 18"><circle cx="9" cy="9" r="6.8" stroke="#6f6f6f" stroke-width="1.5" fill="none"/><path d="M9 5.3v4l2.6 1.7" stroke="#6f6f6f" stroke-width="1.5" fill="none"/></svg>
<div class="a nw" style="top:919px;font-size:13px;color:#6f6f6f;right:1081px;">Baixo</div>
<svg class="a" style="left:843px;top:919px;" width="16" height="16" viewBox="0 0 16 16"><circle cx="8" cy="8" r="7" fill="#4a4a4a"/><path d="M8 4.3v6.5M5.5 8.5L8 11l2.5-2.5" stroke="#282828" stroke-width="1.5" fill="none"/></svg>
<div class="a" style="left:305px;top:969px;width:86px;height:38px;background:#3d3d3d;border-radius:19px;"></div>
<div class="a nw" style="top:980px;font-size:14px;color:#fff;left:321px;-webkit-text-stroke:0.55px #fff">Ver mais</div>
<div class="card" style="left:908px;top:250px;width:604px;height:430px"></div>
<div class="a nw" style="top:275px;font-size:18px;color:#fff;left:933px;-webkit-text-stroke:0.7px currentColor;letter-spacing:0.1px;">Popular entre diferentes públicos</div>
<div class="a nw" style="top:301px;font-size:13px;color:#aaa;left:933px;">Visualizações · Últimos 28 dias</div>
<div class="a" style="left:931px;top:341px;width:84px;height:32px;background:#fff;border-radius:8px;"></div>
<div class="a nw" style="top:348px;font-size:14px;color:#0f0f0f;left:943px;-webkit-text-stroke:0.5px #0f0f0f">Novidade</div>
<div class="a" style="left:1027px;top:341px;width:68px;height:32px;background:#3a3a3a;border-radius:8px;"></div>
<div class="a nw" style="top:348px;font-size:14px;color:#fff;left:1039px;-webkit-text-stroke:0.55px #fff">Casual</div>
<div class="a" style="left:1108px;top:341px;width:71px;height:32px;background:#3a3a3a;border-radius:8px;"></div>
<div class="a nw" style="top:348px;font-size:14px;color:#fff;left:1119px;-webkit-text-stroke:0.55px #fff">Normal</div>
<svg class="a" style="left:933px;top:398px;border-radius:4px;opacity:1;filter:saturate(.85) brightness(.9)" width="56" height="32" viewBox="0 0 56 32"><defs><clipPath id="ct1933398"><rect width="56" height="32" rx="4"/></clipPath></defs><g clip-path="url(#ct1933398)"><rect width="56" height="32" fill="#3a2a1a"/>
<rect y="0" width="56" height="4" fill="#2a1a10"/><rect x="8" y="1" width="40" height="2" fill="#e8c040"/>
<rect y="4" width="56" height="10" fill="#8c9cb0"/><rect y="4" width="56" height="4" fill="#a8b4c4"/>
<path d="M20 14V7M24 14V5M28 14V6M32 14V5M36 14V7" stroke="#9a78c8" stroke-width="2.4"/>
<rect y="12" width="56" height="6" fill="#5a8a3a"/><ellipse cx="28" cy="15" rx="10" ry="4" fill="#3a7a2a"/>
<rect y="18" width="56" height="14" fill="#4a2c1a"/>
<ellipse cx="28" cy="25" rx="14" ry="4.5" fill="#c84a40"/><ellipse cx="24" cy="24" rx="5" ry="2.5" fill="#e07060"/><ellipse cx="33" cy="25" rx="5" ry="2.5" fill="#d86050"/></g></svg>
<div class="a nw" style="top:407px;font-size:13px;color:#fff;left:1001px;-webkit-text-stroke:0.3px currentColor;">La planta que 'fabrica' fertilizante y tiene…</div>
<div class="a" style="left:1276px;top:411px;width:153px;height:8px;background:#b266ee;border-radius:4px;"></div>
<div class="a nw" style="top:407px;font-size:13px;color:#fff;right:441px;-webkit-text-stroke:0.3px currentColor;letter-spacing:-0.3px;">3,4 mil</div>
<svg class="a" style="left:933px;top:438px;border-radius:4px;opacity:1;filter:saturate(.85) brightness(.9)" width="56" height="32" viewBox="0 0 56 32"><defs><clipPath id="ct2933438"><rect width="56" height="32" rx="4"/></clipPath></defs><g clip-path="url(#ct2933438)"><rect width="56" height="32" fill="#4a3a20"/>
<rect y="0" width="56" height="8" fill="#2a3a1a"/><rect x="4" y="1" width="48" height="3" fill="#e8d030"/><rect x="8" y="5" width="40" height="1.5" fill="#c8c8a0"/>
<rect y="7" width="56" height="10" fill="#4a6a2a"/>
<path d="M20 8V18M24 8V19M28 9V18M32 8V19" stroke="#7ab040" stroke-width="1.8"/>
<rect y="17" width="56" height="15" fill="#4a3020"/><ellipse cx="30" cy="24" rx="14" ry="5" fill="#5a3a28"/>
<path d="M38 14l5-3-1 4z" fill="#e02020"/>
<rect x="2" y="24" width="14" height="2" fill="#e8d030"/><rect x="3" y="27" width="12" height="2" fill="#d82020"/></g></svg>
<div class="a nw" style="top:447px;font-size:13px;color:#fff;left:1001px;-webkit-text-stroke:0.3px currentColor;">La planta con más proteínas que la soja …</div>
<div class="a" style="left:1312px;top:451px;width:117px;height:8px;background:#b266ee;border-radius:4px;"></div>
<div class="a nw" style="top:447px;font-size:13px;color:#fff;right:441px;-webkit-text-stroke:0.3px currentColor;letter-spacing:-0.3px;">2,6 mil</div>
<svg class="a" style="left:933px;top:478px;border-radius:4px;opacity:1;filter:saturate(.85) brightness(.9)" width="56" height="32" viewBox="0 0 56 32"><defs><clipPath id="ct3933478"><rect width="56" height="32" rx="4"/></clipPath></defs><g clip-path="url(#ct3933478)"><rect width="56" height="32" fill="#3a2818"/>
<rect y="0" width="56" height="5" fill="#5a5a40"/><rect x="4" y="1" width="48" height="1.2" fill="#e8e8e0"/><rect x="6" y="3" width="44" height="1.2" fill="#d82020"/>
<rect y="5" width="56" height="9" fill="#5a8a3a"/><ellipse cx="28" cy="10" rx="14" ry="4" fill="#3a6a22"/>
<rect y="14" width="56" height="18" fill="#3a2412"/>
<circle cx="22" cy="21" r="2.5" fill="#b89868"/><circle cx="28" cy="23" r="2.5" fill="#c8a878"/><circle cx="34" cy="21" r="2.3" fill="#b89060"/><circle cx="40" cy="23" r="2.3" fill="#a88858"/><circle cx="26" cy="27" r="2.3" fill="#b09060"/>
<path d="M12 21l5-2-1 3z" fill="#e02020"/>
<rect x="2" y="25" width="16" height="2" fill="#e8d030"/><rect x="2" y="28" width="18" height="2" fill="#e8d030"/></g></svg>
<div class="a nw" style="top:487px;font-size:13px;color:#fff;left:1001px;-webkit-text-stroke:0.3px currentColor;">La planta que salvó a las familias de la h…</div>
<div class="a" style="left:1401px;top:491px;width:28px;height:8px;background:#b266ee;border-radius:4px;"></div>
<div class="a nw" style="top:487px;font-size:13px;color:#fff;right:441px;-webkit-text-stroke:0.3px currentColor;letter-spacing:-0.3px;">615</div>
<svg class="a" style="left:933px;top:518px;border-radius:4px;opacity:1;filter:saturate(.85) brightness(.9)" width="56" height="32" viewBox="0 0 56 32"><defs><clipPath id="ct4933518"><rect width="56" height="32" rx="4"/></clipPath></defs><g clip-path="url(#ct4933518)"><rect width="56" height="32" fill="#3a2a1a"/>
<rect width="30" height="20" fill="#5a4a30"/><rect width="56" height="4" fill="#8a7050"/>
<circle cx="6" cy="10" r="3" fill="#a83020"/><circle cx="13" cy="11" r="3" fill="#b84030"/><circle cx="21" cy="10" r="3" fill="#983020"/>
<rect x="2" y="12" width="24" height="6" fill="#4a6a2a"/>
<rect x="30" y="0" width="26" height="22" fill="#6a5a4a"/><ellipse cx="42" cy="10" rx="8" ry="8" fill="#9a7a5a"/><ellipse cx="40" cy="18" rx="9" ry="5" fill="#8a6a40"/>
<circle cx="36" cy="20" r="2" fill="#c0a060"/><circle cx="42" cy="21" r="2" fill="#b89050"/>
<path d="M24 18l5-3-1 4z" fill="#e02020"/>
<rect x="2" y="24" width="26" height="2.5" fill="#e8d030"/><rect x="6" y="27.5" width="18" height="2" fill="#e8d030"/></g></svg>
<div class="a nw" style="top:527px;font-size:13px;color:#fff;left:1001px;-webkit-text-stroke:0.3px currentColor;">Estos 6 alimentos simples pueden aseg…</div>
<div class="a" style="left:1409px;top:531px;width:20px;height:8px;background:#b266ee;border-radius:4px;"></div>
<div class="a nw" style="top:527px;font-size:13px;color:#fff;right:441px;-webkit-text-stroke:0.3px currentColor;letter-spacing:-0.3px;">434</div>
<svg class="a" style="left:933px;top:558px;border-radius:4px;opacity:1;filter:saturate(.85) brightness(.9)" width="56" height="32" viewBox="0 0 56 32"><defs><clipPath id="ct5933558"><rect width="56" height="32" rx="4"/></clipPath></defs><g clip-path="url(#ct5933558)"><rect width="56" height="32" fill="#5a4a30"/>
<rect width="56" height="14" fill="#4a7a3a"/>
<rect x="2" y="1" width="30" height="5" fill="#c02020"/><rect x="4" y="2" width="26" height="2.5" fill="#f0e0d0"/>
<rect x="6" y="7" width="22" height="3" fill="#5a8a4a"/>
<rect y="14" width="56" height="18" fill="#4a3a22"/>
<path d="M4 30L10 18L14 30M14 30L20 20L24 30" fill="#6a5030"/>
<ellipse cx="44" cy="5" rx="9" ry="3" fill="#a88860"/><circle cx="44" cy="11" r="5.5" fill="#e8c0a0"/><ellipse cx="44" cy="15" rx="4" ry="2.5" fill="#f0f0f0"/>
<path d="M34 32C34 22 54 22 56 32z" fill="#c8b8a0"/><ellipse cx="42" cy="24" rx="8" ry="3" fill="#6a4020"/>
<path d="M28 28l6-2-2 4z" fill="#e02020"/></g></svg>
<div class="a nw" style="top:567px;font-size:13px;color:#fff;left:1001px;-webkit-text-stroke:0.3px currentColor;">Entierra Madera Podrida en Tu Jardín — …</div>
<div class="a" style="left:1420px;top:571px;width:9px;height:8px;background:#b266ee;border-radius:4px;"></div>
<div class="a nw" style="top:567px;font-size:13px;color:#fff;right:441px;-webkit-text-stroke:0.3px currentColor;letter-spacing:-0.3px;">95</div>
<div class="a" style="left:933px;top:617px;width:86px;height:38px;background:#3d3d3d;border-radius:19px;"></div>
<div class="a nw" style="top:628px;font-size:14px;color:#fff;left:949px;-webkit-text-stroke:0.55px #fff">Ver mais</div>
<div class="card" style="left:908px;top:704px;width:604px;height:164px"></div>
<div class="a nw" style="top:729px;font-size:18px;color:#fff;left:933px;-webkit-text-stroke:0.7px currentColor;">Canais que seu público assiste</div>
<div class="a nw" style="top:755px;font-size:13px;color:#aaa;left:933px;">Últimos 28 dias</div>
<div class="a nw" style="top:798px;font-size:15px;color:#aaa;left:933px;">Não há dados qualificados suficientes sobre o público para exibir este relatório.</div>
<div class="a nw" style="top:822px;font-size:15px;color:#3ea6ff;left:933px;">Saiba mais</div>
<div class="card" style="left:908px;top:892px;width:604px;height:300px"></div>
<div class="a nw" style="top:917px;font-size:18px;color:#fff;left:933px;-webkit-text-stroke:0.7px currentColor;">O que seu público assiste</div>
<div class="a nw" style="top:943px;font-size:13px;color:#aaa;left:933px;">Últimos 7 dias</div>
<div class="a nw" style="top:986px;font-size:15px;color:#aaa;left:933px;">Não há dados qualificados suficientes sobre o público para exibir este relatório.</div>
<div class="a nw" style="top:1010px;font-size:15px;color:#3ea6ff;left:933px;">Saiba mais</div>
<!-- TASKBAR -->
<div class="a" style="left:0;top:1032px;width:1920px;height:48px;background:linear-gradient(90deg,#dadada 0%,#dfe0e3 40%,#e6e2e2 60%,#e4dcd8 70%,#dcdcdc 100%)"></div>
<div class="a" style="left:0;top:1032px;width:1920px;height:1px;background:#c8c8c8"></div>
<!-- weather -->
<svg class="a" style="left:16px;top:1044px" width="30" height="26" viewBox="0 0 30 26"><circle cx="19" cy="10" r="5" fill="#f5a030"/><path d="M6 24a5.5 5.5 0 0 1 1-11 7 7 0 0 1 13 1.5 4.8 4.8 0 0 1 1 9.5z" fill="#d4e6f8"/><path d="M6 24a5.5 5.5 0 0 1 1-11 7 7 0 0 1 13 1.5 4.8 4.8 0 0 1 1 9.5z" fill="none" stroke="#a8c8ec" stroke-width=".8"/></svg>
<div class="a" style="left:30px;top:1038px;width:16px;height:16px;border-radius:8px;background:#c42b1c;color:#fff;font-size:11px;line-height:16px;text-align:center">2</div>
<div class="a nw" style="left:50px;top:1041px;font-size:12px;color:#1a1a1a">26°C</div>
<div class="a nw" style="left:50px;top:1057px;font-size:12px;color:#444">Pred. nublado</div>
<!-- start -->
<svg class="a" style="left:617px;top:1045px" width="24" height="24" viewBox="0 0 24 24"><defs><linearGradient id="wg" x1="0" y1="0" x2="1" y2="1"><stop offset="0" stop-color="#3ccaf4"/><stop offset="1" stop-color="#0a6fd8"/></linearGradient></defs><rect x="0" y="0" width="11.2" height="11.2" fill="url(#wg)"/><rect x="12.6" y="0" width="11.2" height="11.2" fill="url(#wg)"/><rect x="0" y="12.6" width="11.2" height="11.2" fill="url(#wg)"/><rect x="12.6" y="12.6" width="11.2" height="11.2" fill="url(#wg)"/></svg>
<!-- search -->
<div class="a" style="left:654px;top:1041px;width:218px;height:31px;border-radius:16px;background:#f4f4f4;border:1px solid #d6d6d6"></div>
<svg class="a" style="left:664px;top:1047px" width="18" height="18" viewBox="0 0 18 18"><circle cx="7.5" cy="7.5" r="5.8" stroke="#1a1a1a" stroke-width="1.6" fill="none"/><path d="M11.8 11.8L16 16" stroke="#1a1a1a" stroke-width="1.8"/></svg>
<div class="a nw" style="left:690px;top:1048px;font-size:14px;color:#555">Pesquisar</div>
<svg class="a" style="left:820px;top:1043px" width="48" height="26" viewBox="0 0 48 26"><defs><linearGradient id="sky" x1="0" y1="0" x2="0" y2="1"><stop offset="0" stop-color="#7ec0ea"/><stop offset="1" stop-color="#e0f0f8"/></linearGradient></defs>
<path d="M3 20C1 14 3 9 8 8c1-4 5-6 9-5 3-3 9-3 12 0 4-2 10-1 12 3 4 0 6 4 6 8v6z" fill="url(#sky)"/>
<circle cx="11.5" cy="7.5" r="3" fill="#f6c030"/>
<rect x="2" y="13" width="44" height="5" fill="#9cd0e8"/>
<ellipse cx="25" cy="22" rx="21" ry="3.5" fill="#f0c890"/>
<path d="M4 22c1-4 2-7 4-9 1 3 1 6 1 9z" fill="#4a9a3a"/>
<path d="M38.5 10L36 20" stroke="#6a5030" stroke-width=".8"/>
<path d="M31 10C33 5 41 3 46 8 43 8 37 9 31 10z" fill="#40a060"/><path d="M37 8.5C39 4 42 4 44 6 42 7 39 8 37 8.5z" fill="#f0c020"/>
<path d="M14 22L20 14 25 16 31 14 34 21 25 23z" fill="#e87030"/>
<path d="M15 20L20.5 13 25 15 25 21z" fill="#f8e4b8"/><path d="M25 15L30.5 13 33.5 19 25 21z" fill="#fdf0d0"/>
</svg>
<!-- task view -->
<svg class="a" style="left:884px;top:1044px" width="26" height="24" viewBox="0 0 26 24"><defs><linearGradient id="tvg" x1="0" y1="0" x2="1" y2="1"><stop offset="0" stop-color="#f8f8f8"/><stop offset="1" stop-color="#e4e4e4"/></linearGradient><linearGradient id="tvd" x1="0" y1="0" x2="0" y2="1"><stop offset="0" stop-color="#3a3a3a"/><stop offset="1" stop-color="#111"/></linearGradient></defs><rect x="1" y="7" width="18" height="16" rx="1" fill="url(#tvd)"/><rect x="7" y="1" width="17.5" height="15.5" rx="1" fill="url(#tvg)"/><rect x="7" y="7" width="12" height="9.5" fill="#b8b8b8"/></svg>
<!-- copilot -->
<svg class="a" style="left:928px;top:1044px" width="26" height="24" viewBox="0 0 26 24"><defs><linearGradient id="cg1" x1="0" y1="0" x2="0" y2="1"><stop offset="0" stop-color="#1a8ff0"/><stop offset=".45" stop-color="#3cc88a"/><stop offset=".8" stop-color="#f0c020"/><stop offset="1" stop-color="#f08030"/></linearGradient><linearGradient id="cg2" x1="0" y1="0" x2="0" y2="1"><stop offset="0" stop-color="#2050d8"/><stop offset=".4" stop-color="#b050e0"/><stop offset=".75" stop-color="#f060a0"/><stop offset="1" stop-color="#f07040"/></linearGradient></defs>
<path d="M10 2h6c1.5 0 2.3.8 2.8 2L15 17c-.4 1.3-1.2 2-2.6 2H7c-1.6 0-2.6-1-2-2.6L8 5c.4-1.8 1-3 2-3z" fill="url(#cg1)"/>
<path d="M13 22h6c1.3 0 2-.8 2.4-2l2.6-9.5c.4-1.5-.5-2.5-2-2.5h-5L14.3 20c-.3 1-.8 2-1.3 2z" fill="url(#cg2)"/></svg>
<!-- telegram -->
<svg class="a" style="left:973px;top:1044px" width="24" height="24" viewBox="0 0 24 24"><circle cx="12" cy="12" r="11" fill="#2a9ed8"/><path d="M5.5 11.5L17.5 6.5 15.5 17.5 11 14l-2 2.5-.5-4z" fill="#fff"/></svg>
<!-- edge -->
<svg class="a" style="left:1016px;top:1043px" width="26" height="26" viewBox="0 0 26 26"><defs><linearGradient id="eg1" x1="0" y1="0" x2="1" y2="1"><stop offset="0" stop-color="#38b8f0"/><stop offset=".6" stop-color="#1a7ad0"/><stop offset="1" stop-color="#0c4e9a"/></linearGradient><linearGradient id="eg2" x1="0" y1="0" x2="1" y2="1"><stop offset="0" stop-color="#30b8e0"/><stop offset="1" stop-color="#5ad860"/></linearGradient></defs>
<circle cx="13" cy="13" r="12" fill="url(#eg1)"/>
<path d="M3 9C5 3 11 1 15 1.3c5 .4 9.5 4.5 10 10 .2 2.5-1 4-3.5 4H13c0-3.5 2.5-6 5.5-6-2-4-9-6-15.5-.3z" fill="url(#eg2)"/>
<circle cx="15.5" cy="14" r="4.2" fill="#dfe0e3"/>
<path d="M11.3 14c0 4 3.5 6.5 7.5 6.5 1.8 0 3.5-.6 4.8-1.6C21.5 23 17.5 25 13 25 9 25 6 22 6 18c0-3 2-5.5 5.3-6z" fill="#0c5aa8"/></svg>
<!-- store -->
<svg class="a" style="left:1060px;top:1043px" width="26" height="26" viewBox="0 0 26 26"><rect x="2" y="6" width="22" height="19" rx="3" fill="#1e4f9a"/><path d="M8 6V3.5A1.5 1.5 0 0 1 9.5 2h7A1.5 1.5 0 0 1 18 3.5V6" stroke="#4aa0f0" stroke-width="1.6" fill="none"/><rect x="8" y="10" width="4.5" height="4.5" fill="#f25022"/><rect x="13.5" y="10" width="4.5" height="4.5" fill="#7fba00"/><rect x="8" y="15.5" width="4.5" height="4.5" fill="#00a4ef"/><rect x="13.5" y="15.5" width="4.5" height="4.5" fill="#ffb900"/></svg>
<!-- explorer -->
<svg class="a" style="left:1103px;top:1044px" width="26" height="24" viewBox="0 0 26 24"><path d="M1 3a1.5 1.5 0 0 1 1.5-1.5h7l2.5 2.5h11.5A1.5 1.5 0 0 1 25 5.5V21a1.5 1.5 0 0 1-1.5 1.5h-21A1.5 1.5 0 0 1 1 21z" fill="#e8b420"/><path d="M1 8h24v13a1.5 1.5 0 0 1-1.5 1.5h-21A1.5 1.5 0 0 1 1 21z" fill="#fcd34a"/><rect x="6" y="16" width="14" height="5" rx="1" fill="#2a7ad0"/></svg>
<!-- outlook -->
<svg class="a" style="left:1147px;top:1044px" width="26" height="24" viewBox="0 0 26 24"><defs><linearGradient id="og1" x1="0" y1="0" x2="1" y2="1"><stop offset="0" stop-color="#6ab8f8"/><stop offset="1" stop-color="#2a60d8"/></linearGradient><linearGradient id="og2" x1="0" y1="0" x2="0" y2="1"><stop offset="0" stop-color="#48c8f8"/><stop offset="1" stop-color="#1a88e8"/></linearGradient></defs>
<path d="M6 8L15 2l8 5.5V21a1.5 1.5 0 0 1-1.5 1.5H7.5A1.5 1.5 0 0 1 6 21z" fill="url(#og1)"/>
<path d="M9 7l8-4 6 4.5-8 5z" fill="#3050c8"/>
<path d="M6 12l8 5 9-9v13a1.5 1.5 0 0 1-1.5 1.5H7.5A1.5 1.5 0 0 1 6 21z" fill="url(#og2)"/>
<rect x="1" y="10.5" width="11" height="10.5" rx="2" fill="#1a5ac8"/><ellipse cx="6.5" cy="15.75" rx="2.6" ry="3" stroke="#fff" stroke-width="1.5" fill="none"/></svg>
<!-- capcut -->
<div class="a" style="left:1193px;top:1045px;width:23px;height:21px;border-radius:4px;background:#fff;box-shadow:0 0 1px #aaa"></div>
<svg class="a" style="left:1196px;top:1048px" width="17" height="15" viewBox="0 0 17 15"><path d="M2 3L15 12M15 3L2 12M2 3h13M2 12h13" stroke="#111" stroke-width="2.2" fill="none"/></svg>
<!-- chrome 1 -->
<svg class="a" style="left:1236px;top:1043px" width="26" height="26" viewBox="0 0 26 26"><path d="M23.61 7.40A12 12 0 0 0 2.84 6.61L8.15 15.80A5.6 5.6 0 0 1 13.00 7.40Z" fill="#e94335"/><path d="M2.84 6.61A12 12 0 0 0 12.54 24.99L17.85 15.80A5.6 5.6 0 0 1 8.15 15.80Z" fill="#2ea84f"/><path d="M12.54 24.99A12 12 0 0 0 23.61 7.40L13.00 7.40A5.6 5.6 0 0 1 17.85 15.80Z" fill="#fbc02d"/><circle cx="13" cy="13" r="5.6" fill="#fff"/><circle cx="13" cy="13" r="4.5" fill="#3b82f0"/></svg>
<div class="a" style="left:1250px;top:1038px;width:16px;height:16px;border-radius:8px;background:#fff;border:1px solid #bbb"></div><div class="a" style="left:1251px;top:1043px;width:14px;height:1.5px;background:#c02020"></div><div class="a" style="left:1256px;top:1050px;width:5px;height:1.5px;background:#d03030"></div>
<div class="a" style="left:1246px;top:1073px;width:8px;height:3px;border-radius:2px;background:#888"></div>
<!-- chrome 2 active -->
<div class="a" style="left:1274px;top:1037px;width:38px;height:40px;border-radius:5px;background:#f2f2f2;border:1px solid #e2e2e2"></div>
<svg class="a" style="left:1280px;top:1043px" width="26" height="26" viewBox="0 0 26 26"><path d="M23.61 7.40A12 12 0 0 0 2.84 6.61L8.15 15.80A5.6 5.6 0 0 1 13.00 7.40Z" fill="#e94335"/><path d="M2.84 6.61A12 12 0 0 0 12.54 24.99L17.85 15.80A5.6 5.6 0 0 1 8.15 15.80Z" fill="#2ea84f"/><path d="M12.54 24.99A12 12 0 0 0 23.61 7.40L13.00 7.40A5.6 5.6 0 0 1 17.85 15.80Z" fill="#fbc02d"/><circle cx="13" cy="13" r="5.6" fill="#fff"/><circle cx="13" cy="13" r="4.5" fill="#3b82f0"/></svg>
<div class="a" style="left:1293px;top:1039px;width:16px;height:16px;border-radius:8px;background:#9a3ac0;color:#fff;font-size:10px;line-height:16px;text-align:center">C</div>
<div class="a" style="left:1285px;top:1073px;width:16px;height:3px;border-radius:2px;background:#0a64c8"></div>
<!-- tray -->
<svg class="a" style="left:1687px;top:1050px" width="12" height="10" viewBox="0 0 12 10"><path d="M1 7.5L6 2.5l5 5" stroke="#222" stroke-width="1.3" fill="none"/></svg>
<svg class="a" style="left:1716px;top:1046px" width="20" height="18" viewBox="0 0 20 18"><path d="M3 9a6.5 6.5 0 0 1 12-3.5M15 2v4h-4M3 13l1 2.5 3-.5" stroke="#222" stroke-width="1.2" fill="none"/><circle cx="13.5" cy="13" r="4" fill="#f59a00"/></svg>
<svg class="a" style="left:1748px;top:1047px" width="20" height="16" viewBox="0 0 20 16"><path d="M4 13a3.5 3.5 0 0 1 0-7 5.5 5.5 0 0 1 10.5 0.5 3.2 3.2 0 0 1 0 6.5z" fill="#bbb" stroke="#333" stroke-width="1.1"/><path d="M2 1L17 15" stroke="#222" stroke-width="1.2"/></svg>
<svg class="a" style="left:1780px;top:1047px" width="20" height="18" viewBox="0 0 20 18"><rect x="1" y="2" width="12" height="10" fill="none" stroke="#222" stroke-width="1.1"/><path d="M5 15h6M8 12v3" stroke="#222" stroke-width="1.1"/><rect x="14" y="0.8" width="3" height="4" rx="1.3" fill="none" stroke="#222" stroke-width="1"/><path d="M15.5 5v11" stroke="#222" stroke-width="1.1"/></svg>
<svg class="a" style="left:1806px;top:1049px" width="18" height="16" viewBox="0 0 18 16"><path d="M1.5 4.5h2.5l4-3.5v7.5M8 13.5L4 10H1.5V4.5" stroke="#222" stroke-width="1.1" fill="none" stroke-linejoin="round"/><circle cx="12" cy="11" r="3.8" fill="#1a1a1a"/><path d="M10.5 9.5l3 3M13.5 9.5l-3 3" stroke="#fff" stroke-width="1.1"/></svg>
<div class="a nw" style="left:1871px;top:1041px;font-size:12px;color:#1a1a1a">10:21</div>
<div class="a nw" style="left:1839px;top:1057px;font-size:12px;color:#1a1a1a">14/02/2026</div>

</body></html>
